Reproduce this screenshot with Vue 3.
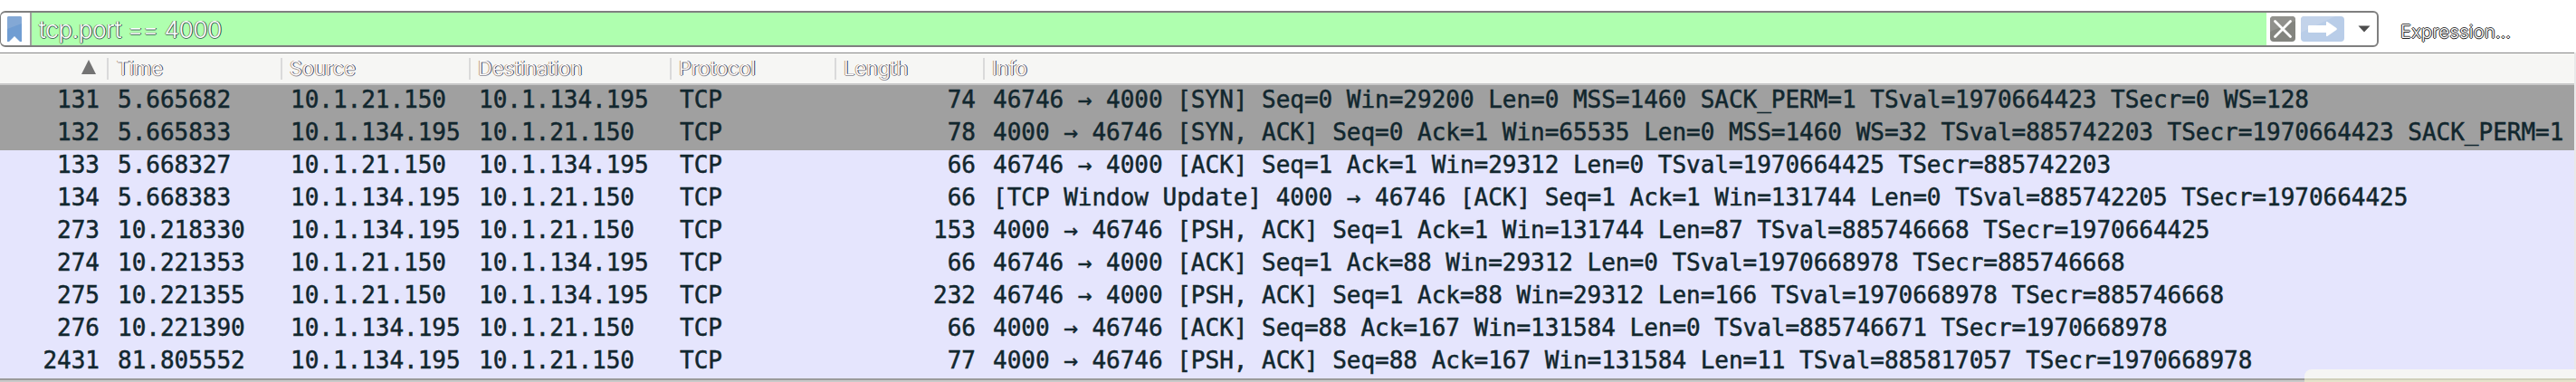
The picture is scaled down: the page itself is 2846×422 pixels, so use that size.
<script setup>
const columns = [
  { key: 'no', label: '' },
  { key: 'time', label: 'Time' },
  { key: 'source', label: 'Source' },
  { key: 'destination', label: 'Destination' },
  { key: 'protocol', label: 'Protocol' },
  { key: 'length', label: 'Length' },
  { key: 'info', label: 'Info' },
]

const A = '10.1.21.150'
const B = '10.1.134.195'

const packets = [
  [131, '5.665682', A, B, 74, '46746 → 4000 [SYN] Seq=0 Win=29200 Len=0 MSS=1460 SACK_PERM=1 TSval=1970664423 TSecr=0 WS=128'],
  [132, '5.665833', B, A, 78, '4000 → 46746 [SYN, ACK] Seq=0 Ack=1 Win=65535 Len=0 MSS=1460 WS=32 TSval=885742203 TSecr=1970664423 SACK_PERM=1'],
  [133, '5.668327', A, B, 66, '46746 → 4000 [ACK] Seq=1 Ack=1 Win=29312 Len=0 TSval=1970664425 TSecr=885742203'],
  [134, '5.668383', B, A, 66, '[TCP Window Update] 4000 → 46746 [ACK] Seq=1 Ack=1 Win=131744 Len=0 TSval=885742205 TSecr=1970664425'],
  [273, '10.218330', B, A, 153, '4000 → 46746 [PSH, ACK] Seq=1 Ack=1 Win=131744 Len=87 TSval=885746668 TSecr=1970664425'],
  [274, '10.221353', A, B, 66, '46746 → 4000 [ACK] Seq=1 Ack=88 Win=29312 Len=0 TSval=1970668978 TSecr=885746668'],
  [275, '10.221355', A, B, 232, '46746 → 4000 [PSH, ACK] Seq=1 Ack=88 Win=29312 Len=166 TSval=1970668978 TSecr=885746668'],
  [276, '10.221390', B, A, 66, '4000 → 46746 [ACK] Seq=88 Ack=167 Win=131584 Len=0 TSval=885746671 TSecr=1970668978'],
  [2431, '81.805552', B, A, 77, '4000 → 46746 [PSH, ACK] Seq=88 Ack=167 Win=131584 Len=11 TSval=885817057 TSecr=1970668978'],
].map(([no, time, source, destination, length, info]) => ({
  no, time, source, destination, protocol: 'TCP', length, info, syn: info.includes('[SYN'),
}))
</script>

<template>
  <div class="window">
    <div class="toolbar">
      <div class="filter">
        <div class="bookmark">
          <svg width="16" height="28" viewBox="0 0 16 28">
            <path d="M0 2Q0 0 2 0H14Q16 0 16 2V28H14L8 22L2 28H0Z" fill="#709dd2" />
            <path d="M0 2Q0 0 2 0H14Q16 0 16 2V8L0 14Z" fill="#83a8d5" />
          </svg>
        </div>
        <div class="query">tcp.port == 4000</div>
        <div class="actions">
          <svg width="28" height="28" viewBox="0 0 28 28">
            <rect width="28" height="28" rx="4" fill="#83847f" />
            <path d="M0 4Q0 0 4 0H24Q28 0 28 4V5L0 17Z" fill="#91918d" />
            <path d="M5.5 5.5L22.5 22.5M22.5 5.5L5.5 22.5" stroke="#fff" stroke-width="2.8" stroke-linecap="round" />
          </svg>
          <svg class="apply" width="48" height="28" viewBox="0 0 48 28">
            <rect width="48" height="28" rx="4" fill="#b9cde8" />
            <path d="M0 4Q0 0 4 0H38L0 18Z" fill="#c3d3ea" />
            <path d="M9 10H28V7Q28 5.2 29.6 6.2L39.4 13Q40.4 14 39.4 15L29.6 21.800Q28 22.800 28 21V18H9Q8 18 8 17V11Q8 10 9 10Z" fill="#fff" />
          </svg>
          <svg class="caret" width="14" height="8" viewBox="0 0 14 8">
            <path d="M0.500 0.500H13.500L7 7.500Z" fill="#4d4d4d" />
          </svg>
        </div>
      </div>
      <div class="expression">Expression…</div>
    </div>

    <div class="list">
      <div class="grid head">
        <div v-for="c in columns" :key="c.key" class="th" :class="c.key">
          <svg v-if="c.key === 'no'" width="16" height="16" viewBox="0 0 16 16">
            <path d="M8 0L16 16H0Z" fill="#737373" />
          </svg>
          <span v-else>{{ c.label }}</span>
        </div>
      </div>
      <div v-for="p in packets" :key="p.no" class="grid row" :class="{ syn: p.syn }">
        <div v-for="c in columns" :key="c.key" class="td" :class="c.key">{{ p[c.key] }}</div>
      </div>
    </div>
    <div class="divider"></div>
    <div class="status"></div>
  </div>
</template>

<style>
body {
  margin: 0;
  background: #fff;
}
</style>

<style scoped>
.window {
  position: relative;
  width: 2846px;
  height: 422px;
  overflow: hidden;
  background: #fff;
  box-sizing: border-box;
}
.toolbar {
  display: flex;
  height: 58px;
  padding-top: 12px;
  box-sizing: border-box;
}
.filter {
  display: flex;
  width: 2628px;
  height: 40px;
  box-sizing: border-box;
  border: 2px solid #7f7f7f;
  border-left-width: 1px;
  border-radius: 6px;
}
.bookmark {
  width: 34px;
  box-sizing: border-box;
  padding: 4px 0 0 7px;
  border-right: 2px solid #a0a0a0;
}
.bookmark svg {
  display: block;
}
.query {
  flex: 1;
  padding-left: 8px;
  background: #afffaf;
  font: 300 26px/37px Inter, sans-serif;
  letter-spacing: -0.3px;
  color: #fff;
  text-shadow: 1px 0 0 #1b3f4a, 0 1px 0 #4d7560, -1px 0 0 #8f9a5c;
}
.actions {
  display: flex;
  align-items: center;
  width: 122px;
  box-sizing: border-box;
  padding-left: 4px;
}
.apply {
  margin-left: 6px;
}
.caret {
  margin-left: 15px;
}
.expression {
  margin-left: 24px;
  font: 300 20px/46px Inter, sans-serif;
  letter-spacing: 0.3px;
  color: #fff;
  text-shadow: 1px 0 0 #222, -1px 0 0 #222, 0 1px 0 #222, 0 -1px 0 #444;
}
.list {
  width: 2844px;
  box-shadow: 2px 0 0 #e9e9e9;
}
.grid {
  display: grid;
  grid-template-columns: 120px 192px 208px 222px 182px 164px 1fr;
}
.head {
  height: 36px;
  box-sizing: border-box;
  border-top: 1px solid #888;
  border-bottom: 2px solid #c8c8c8;
  background: #f6f6f4;
  align-items: center;
}
.th {
  height: 24px;
  box-sizing: border-box;
  padding-left: 8px;
  border-right: 2px solid #dadada;
  font: 300 22px/23px Inter, sans-serif;
  letter-spacing: 0.1px;
  color: #fff;
  text-shadow: 1px 0 0 #26365f, -1px 0 0 #c09a72, 0 1px 0 #9a9aa2;
}
.th.time {
  padding-left: 9px;
}
.th.info {
  border-right: 0;
}
.th.no {
  display: flex;
  padding: 2px 12px 0 0;
  justify-content: flex-end;
}
.row {
  height: 36px;
  background: #e5e5fd;
}
.row.syn {
  background: #a0a0a0;
}
.td {
  padding-left: 9px;
  font: 400 26px/32px "DejaVu Sans Mono", monospace;
  letter-spacing: -0.02px;
  color: #12272e;
  -webkit-text-stroke: 0.5px #12272e;
  white-space: pre;
}
.td.time {
  padding-left: 10px;
}
.td.no,
.td.length {
  padding: 0 10px 0 0;
  text-align: right;
}
.divider {
  height: 2px;
  background: #9b9b9b;
  border-bottom: 2px solid #c9c9c9;
}
.status {
  position: absolute;
  right: 0;
  bottom: 0;
  width: 300px;
  height: 14px;
  box-sizing: border-box;
  border-top-left-radius: 8px;
  background: linear-gradient(#f5f5f3 0 10px, #d0cfba 10px 12px, #e5e3cb 12px);
}
</style>
